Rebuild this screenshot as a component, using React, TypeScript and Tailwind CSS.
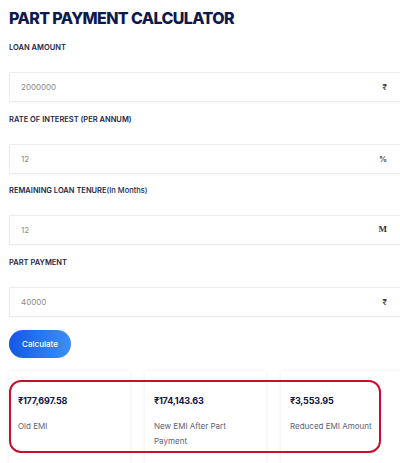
import React from 'react'

const fields = [
  { label: 'LOAN AMOUNT', value: '2000000', unit: '₹' },
  { label: 'RATE OF INTEREST (PER ANNUM)', value: '12', unit: '%' },
  { label: 'REMAINING LOAN TENURE', extra: '(In Months)', value: '12', unit: 'M' },
  { label: 'PART PAYMENT', value: '40000', unit: '₹' },
]

const results = [
  { amount: '₹177,697.58', label: 'Old EMI' },
  { amount: '₹174,143.63', label: 'New EMI After Part Payment' },
  { amount: '₹3,553.95', label: 'Reduced EMI Amount' },
]

export default function App() {
  return (
    <div className="w-[400px] h-[463px] overflow-hidden bg-white" style={{ fontFamily: 'Inter, "Noto Sans", sans-serif' }}>
      <div className="relative w-[420px] pl-[9px] pt-[6px]">
        <h1 className="text-[16px] leading-[24px] font-extrabold text-[#0e1a4d] tracking-[-0.6px]">PART PAYMENT CALCULATOR</h1>

        <div className="mt-[13px] flex flex-col">
          {fields.map(f => (
            <div key={f.label} className="flex flex-col">
              <div className="h-[29px] text-[7.5px] leading-[10px] font-semibold text-[#1d2547]">
                {f.label}
                {f.extra && <span className="font-medium">{f.extra}</span>}
              </div>
              <div className="h-[30px] border border-[#ececec] flex items-center justify-between pl-[11px] pr-[32px] shadow-[0_1px_2px_rgba(0,0,0,0.03)]">
                <span className="text-[8px] text-[#8a8a8a]">{f.value}</span>
                <span
                  className={f.unit === 'M' ? 'text-[9px] font-bold text-[#333]' : 'text-[8px] font-semibold text-[#444]'}
                  style={f.unit === 'M' ? { fontFamily: '"Liberation Serif", serif' } : undefined}
                >
                  {f.unit}
                </span>
              </div>
              <div className="h-[12.5px]" />
            </div>
          ))}
        </div>

        <button className="-mt-[2px] w-[62px] h-[28px] rounded-full bg-gradient-to-r from-[#1557e8] to-[#3d8ff6] text-white text-[8px] font-medium">
          Calculate
        </button>

        <div className="mt-[13px] flex gap-[15px]">
          {results.map(r => (
            <div key={r.label} className="w-[121px] h-[110px] bg-white shadow-[0_0_4px_rgba(0,0,0,0.08)] rounded-[2px] pl-[9px] pt-[23px]">
              <div className="text-[9px] leading-[14px] font-bold text-[#0c164a] tracking-[-0.2px]">{r.amount}</div>
              <div className="mt-[11px] text-[8px] leading-[15px] text-[#5c6278] pr-[8px]">{r.label}</div>
            </div>
          ))}
        </div>

        <div className="absolute left-[9px] top-[380px] w-[372px] h-[73px] border-[2.5px] border-[#c8102e] rounded-[12px] pointer-events-none" />
      </div>
    </div>
  )
}
